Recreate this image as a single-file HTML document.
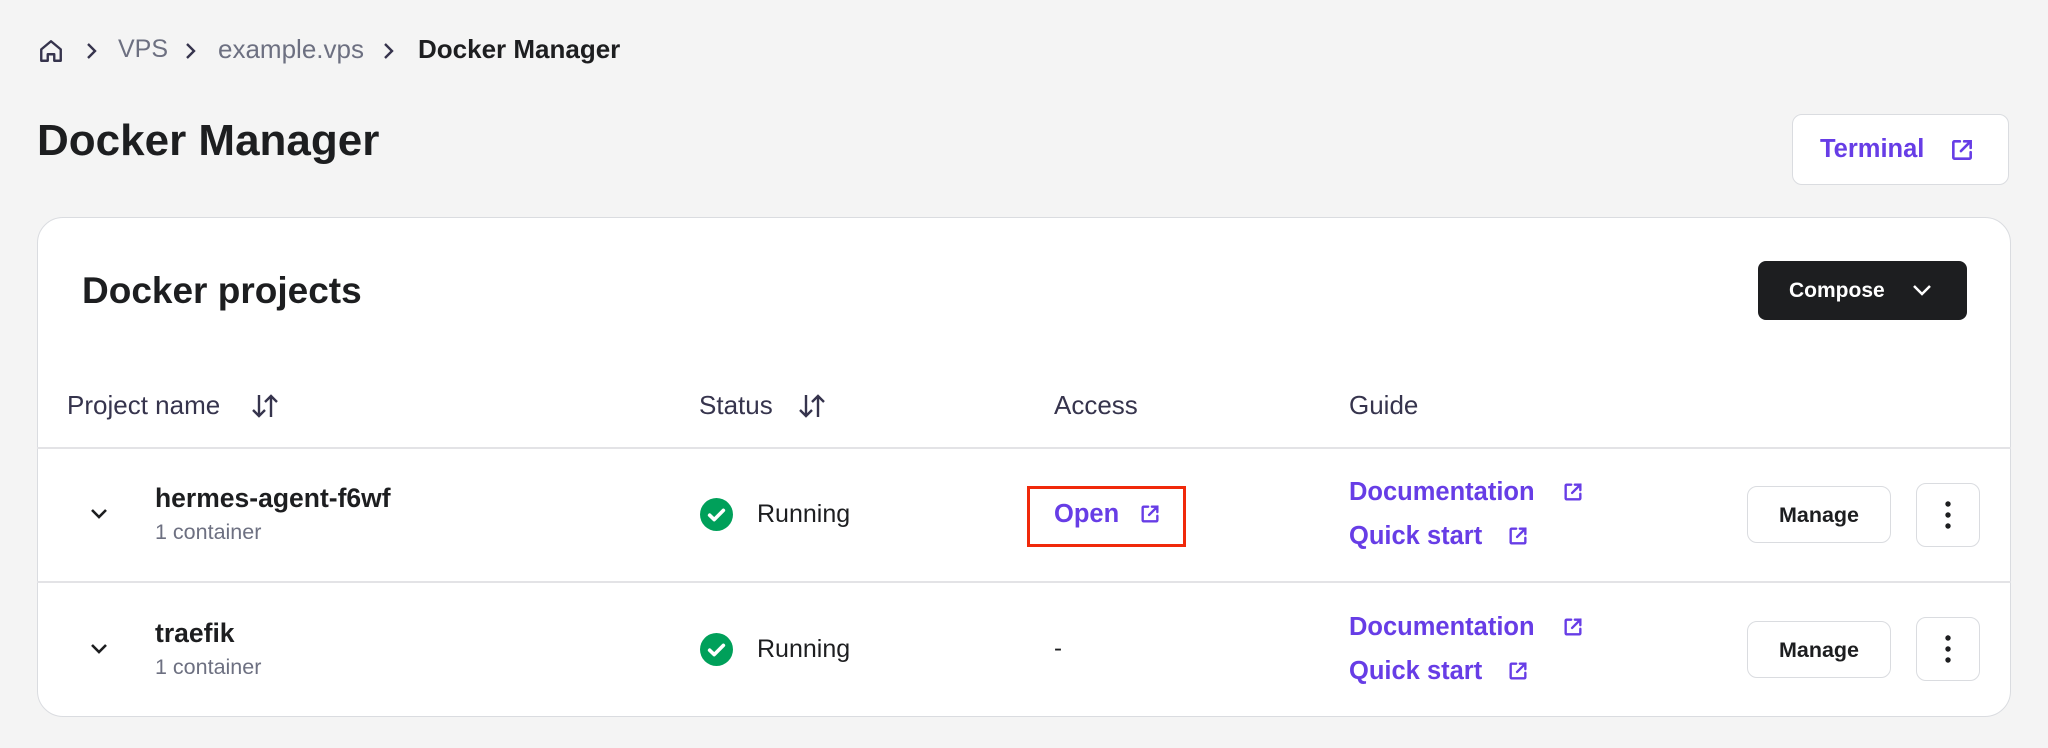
<!DOCTYPE html>
<html><head><meta charset="utf-8"><style>
*{box-sizing:border-box;margin:0;padding:0}
body{width:2048px;height:748px;background:#f4f4f4;font-family:"Liberation Sans",sans-serif;color:#1d1e20;position:relative;overflow:hidden}
.a{position:absolute;white-space:nowrap}
.crumb{font-size:25px;color:#6d7081;top:35px}
.p{color:#673de6;font-weight:bold}
.btn{position:absolute;background:#fff;border:1.5px solid #dadce0;border-radius:10px}
.hd{font-size:26px;color:#36344d;top:390px}
.line{position:absolute;left:37px;width:1974px;height:2px;background:#e3e3e6}
</style></head><body>
<svg class="a" style="left:38px;top:38px" width="26" height="26" viewBox="0 0 24 24" fill="none" stroke="#36344d" stroke-width="2.2" stroke-linejoin="round"><path d="M3 10.5 12 3l9 7.5V21h-6v-6H9v6H3z"/></svg>
<svg class="a" style="left:84px;top:41px" width="14" height="20" viewBox="0 0 14 20" fill="none" stroke="#36344d" stroke-width="2.4"><path d="M4 3l7 7-7 7"/></svg>
<div class="a crumb" style="left:118px">VPS</div>
<svg class="a" style="left:183px;top:41px" width="14" height="20" viewBox="0 0 14 20" fill="none" stroke="#36344d" stroke-width="2.4"><path d="M4 3l7 7-7 7"/></svg>
<div class="a crumb" style="left:218px;font-size:26px;top:34px">example.vps</div>
<svg class="a" style="left:381px;top:41px" width="14" height="20" viewBox="0 0 14 20" fill="none" stroke="#36344d" stroke-width="2.4"><path d="M4 3l7 7-7 7"/></svg>
<div class="a crumb" style="left:418px;color:#1d1e20;font-weight:bold;font-size:26px;top:34px">Docker Manager</div>
<div class="a" style="left:37px;top:116px;font-size:44px;font-weight:bold">Docker Manager</div>
<div class="btn" style="left:1792px;top:114px;width:217px;height:71px"></div>
<div class="a p" style="left:1820px;top:135px;font-size:25.5px">Terminal</div>
<svg class="a" style="left:1949px;top:137px" width="26" height="26" viewBox="0 0 24 24" fill="none" stroke="#673de6" stroke-width="2.4" stroke-linecap="round"><path d="M10 4H5a1 1 0 0 0-1 1v14a1 1 0 0 0 1 1h14a1 1 0 0 0 1-1v-5M14 4h6v6M20 4l-9 9"/></svg>
<div class="a" style="left:37px;top:217px;width:1974px;height:500px;background:#fff;border:1.5px solid #dadce0;border-radius:26px"></div>
<div class="a" style="left:82px;top:270px;font-size:37px;font-weight:bold">Docker projects</div>
<div class="a" style="left:1758px;top:261px;width:209px;height:59px;background:#1d1e20;border-radius:8px"></div>
<div class="a" style="left:1789px;top:279px;font-size:21px;font-weight:bold;color:#fff">Compose</div>
<svg class="a" style="left:1910px;top:279px" width="24" height="22" viewBox="0 0 24 22" fill="none" stroke="#fff" stroke-width="2.5"><path d="M4 7l8 8 8-8"/></svg>
<div class="a hd" style="left:67px">Project name</div>
<div class="a hd" style="left:699px">Status</div>
<div class="a hd" style="left:1054px">Access</div>
<div class="a hd" style="left:1349px">Guide</div>
<svg class="a" style="left:250px;top:392px" width="30" height="28" viewBox="0 0 30 28" fill="none" stroke="#36344d" stroke-width="2.4"><path d="M9 3v21M3 18l6 6 6-6M21 25V4M15 10l6-6 6 6"/></svg>
<svg class="a" style="left:797px;top:392px" width="30" height="28" viewBox="0 0 30 28" fill="none" stroke="#36344d" stroke-width="2.4"><path d="M9 3v21M3 18l6 6 6-6M21 25V4M15 10l6-6 6 6"/></svg>
<div class="line" style="top:447px"></div>
<div class="line" style="top:581px"></div>

<!-- row 1 -->
<svg class="a" style="left:87px;top:504px" width="24" height="20" viewBox="0 0 24 20" fill="none" stroke="#1d1e20" stroke-width="2.6"><path d="M5 6l7 7 7-7"/></svg>
<div class="a" style="left:155px;top:483px;font-size:26.5px;font-weight:bold">hermes-agent-f6wf</div>
<div class="a" style="left:155px;top:520px;font-size:21.5px;color:#6d7081">1 container</div>
<svg class="a" style="left:700px;top:498px" width="33" height="33" viewBox="0 0 24 24"><circle cx="12" cy="12" r="12" fill="#00a05a"/><path d="M7 12.5l3.3 3.2L17 9" fill="none" stroke="#fff" stroke-width="2.6" stroke-linecap="round" stroke-linejoin="round"/></svg>
<div class="a" style="left:757px;top:500px;font-size:25px">Running</div>
<div class="a" style="left:1027px;top:486px;width:159px;height:61px;border:3.5px solid #f0290a"></div>
<div class="a p" style="left:1054px;top:500px;font-size:25.5px">Open</div>
<svg class="a" style="left:1139px;top:503px" width="22" height="22" viewBox="0 0 24 24" fill="none" stroke="#673de6" stroke-width="2.6" stroke-linecap="round"><path d="M10 4H5a1 1 0 0 0-1 1v14a1 1 0 0 0 1 1h14a1 1 0 0 0 1-1v-5M14 4h6v6M20 4l-9 9"/></svg>
<div class="a p" style="left:1349px;top:478px;font-size:25.5px">Documentation</div>
<svg class="a" style="left:1562px;top:481px" width="22" height="22" viewBox="0 0 24 24" fill="none" stroke="#673de6" stroke-width="2.6" stroke-linecap="round"><path d="M10 4H5a1 1 0 0 0-1 1v14a1 1 0 0 0 1 1h14a1 1 0 0 0 1-1v-5M14 4h6v6M20 4l-9 9"/></svg>
<div class="a p" style="left:1349px;top:522px;font-size:25.5px">Quick start</div>
<svg class="a" style="left:1507px;top:525px" width="22" height="22" viewBox="0 0 24 24" fill="none" stroke="#673de6" stroke-width="2.6" stroke-linecap="round"><path d="M10 4H5a1 1 0 0 0-1 1v14a1 1 0 0 0 1 1h14a1 1 0 0 0 1-1v-5M14 4h6v6M20 4l-9 9"/></svg>
<div class="btn" style="left:1747px;top:486px;width:144px;height:57px"></div>
<div class="a" style="left:1747px;top:503px;width:144px;text-align:center;font-size:21.5px;font-weight:bold">Manage</div>
<div class="btn" style="left:1916px;top:483px;width:64px;height:64px"></div>
<svg class="a" style="left:1942px;top:499px" width="12" height="32" viewBox="0 0 12 32" fill="#1d1e20"><circle cx="6" cy="5" r="2.7"/><circle cx="6" cy="16" r="2.7"/><circle cx="6" cy="27" r="2.7"/></svg>

<!-- row 2 -->
<svg class="a" style="left:87px;top:639px" width="24" height="20" viewBox="0 0 24 20" fill="none" stroke="#1d1e20" stroke-width="2.6"><path d="M5 6l7 7 7-7"/></svg>
<div class="a" style="left:155px;top:618px;font-size:26.5px;font-weight:bold">traefik</div>
<div class="a" style="left:155px;top:655px;font-size:21.5px;color:#6d7081">1 container</div>
<svg class="a" style="left:700px;top:633px" width="33" height="33" viewBox="0 0 24 24"><circle cx="12" cy="12" r="12" fill="#00a05a"/><path d="M7 12.5l3.3 3.2L17 9" fill="none" stroke="#fff" stroke-width="2.6" stroke-linecap="round" stroke-linejoin="round"/></svg>
<div class="a" style="left:757px;top:635px;font-size:25px">Running</div>
<div class="a" style="left:1054px;top:635px;font-size:24px">-</div>
<div class="a p" style="left:1349px;top:613px;font-size:25.5px">Documentation</div>
<svg class="a" style="left:1562px;top:616px" width="22" height="22" viewBox="0 0 24 24" fill="none" stroke="#673de6" stroke-width="2.6" stroke-linecap="round"><path d="M10 4H5a1 1 0 0 0-1 1v14a1 1 0 0 0 1 1h14a1 1 0 0 0 1-1v-5M14 4h6v6M20 4l-9 9"/></svg>
<div class="a p" style="left:1349px;top:657px;font-size:25.5px">Quick start</div>
<svg class="a" style="left:1507px;top:660px" width="22" height="22" viewBox="0 0 24 24" fill="none" stroke="#673de6" stroke-width="2.6" stroke-linecap="round"><path d="M10 4H5a1 1 0 0 0-1 1v14a1 1 0 0 0 1 1h14a1 1 0 0 0 1-1v-5M14 4h6v6M20 4l-9 9"/></svg>
<div class="btn" style="left:1747px;top:621px;width:144px;height:57px"></div>
<div class="a" style="left:1747px;top:638px;width:144px;text-align:center;font-size:21.5px;font-weight:bold">Manage</div>
<div class="btn" style="left:1916px;top:617px;width:64px;height:64px"></div>
<svg class="a" style="left:1942px;top:633px" width="12" height="32" viewBox="0 0 12 32" fill="#1d1e20"><circle cx="6" cy="5" r="2.7"/><circle cx="6" cy="16" r="2.7"/><circle cx="6" cy="27" r="2.7"/></svg>
</body></html>
